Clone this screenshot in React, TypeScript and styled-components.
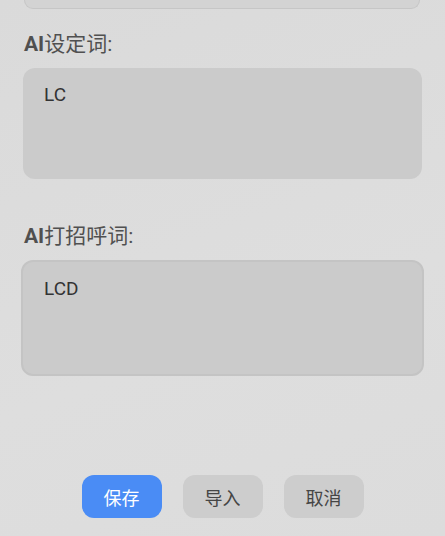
import React from 'react';
import styled, { createGlobalStyle } from 'styled-components';

const GlobalStyle = createGlobalStyle`
    html, body {
        margin: 0;
        padding: 0;
        background: #dcdcdc;
    }
    body {
        font-family: Roboto, "Noto Sans CJK SC", sans-serif;
    }
`;

const Page = styled.div`
    display: flex;
    flex-direction: column;
    height: 536px;
    box-sizing: border-box;
    padding: 0 23px 18px 23px;
    background: linear-gradient(160deg, #dadada 0%, #dedede 60%, #dcdcdc 100%);
    overflow: hidden;
`;

const PrevFieldTail = styled.div`
    height: 9px;
    margin: 0 2px 0 1px;
    box-sizing: border-box;
    background: #d3d3d3;
    border: 1px solid #c6c6c6;
    border-top: 0;
    border-radius: 0 0 12px 12px;
`;

const Field = styled.div<{ $gap: number }>`
    display: flex;
    flex-direction: column;
    margin-top: ${(p) => p.$gap}px;
`;

const Label = styled.label`
    font-size: 21px;
    line-height: 28px;
    color: #505050;
    margin-bottom: 10px;
    padding-left: 1px;
`;

const Strong = styled.span`
    font-weight: 700;
`;

const TextArea = styled.textarea<{ $focused?: boolean }>`
    display: block;
    box-sizing: border-box;
    width: ${(p) => (p.$focused ? 'calc(100% + 4px)' : '100%')};
    margin: ${(p) => (p.$focused ? '0 -2px' : '0')};
    height: ${(p) => (p.$focused ? '116px' : '111px')};
    padding: ${(p) => (p.$focused ? '14px 21px' : '14px 21px')};
    border: ${(p) => (p.$focused ? '2px solid #c4c4c4' : '0')};
    border-radius: 12px;
    background: #cbcbcb;
    color: #333333;
    font-family: Roboto, "Noto Sans CJK SC", sans-serif;
    font-size: 19px;
    line-height: 25px;
    outline: none;
    resize: none;
`;

const Spacer = styled.div`
    flex: 1;
`;

const ButtonRow = styled.div`
    display: flex;
    justify-content: center;
    gap: 21px;
`;

const Button = styled.button<{ $primary?: boolean }>`
    width: 80px;
    height: 43px;
    border: 0;
    border-radius: 12px;
    background: ${(p) => (p.$primary ? '#4a8cf5' : '#cdcdcd')};
    color: ${(p) => (p.$primary ? '#ffffff' : '#454545')};
    font-family: "Noto Sans CJK SC", sans-serif;
    font-size: 18px;
    cursor: pointer;
`;

const App = () => {
    return (
        <>
            <GlobalStyle />
            <Page>
                <PrevFieldTail />
                <Field $gap={21}>
                    <Label>
                        <Strong>AI</Strong>设定词:
                    </Label>
                    <TextArea defaultValue="LC" />
                </Field>
                <Field $gap={43}>
                    <Label>
                        <Strong>AI</Strong>打招呼词:
                    </Label>
                    <TextArea $focused defaultValue="LCD" />
                </Field>
                <Spacer />
                <ButtonRow>
                    <Button $primary>保存</Button>
                    <Button>导入</Button>
                    <Button>取消</Button>
                </ButtonRow>
            </Page>
        </>
    );
};

export default App;
